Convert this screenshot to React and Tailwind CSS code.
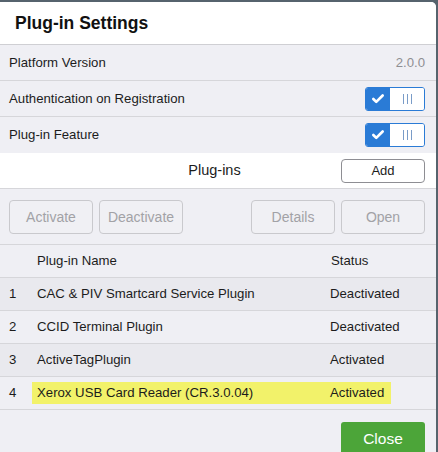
import { Check } from "lucide-react";

const plugins = [
  { id: 1, name: "CAC & PIV Smartcard Service Plugin", status: "Deactivated" },
  { id: 2, name: "CCID Terminal Plugin", status: "Deactivated" },
  { id: 3, name: "ActiveTagPlugin", status: "Activated" },
  { id: 4, name: "Xerox USB Card Reader (CR.3.0.04)", status: "Activated", highlight: true },
];

function Toggle() {
  return (
    <div className="flex w-[60px] h-[24px] rounded-[3px] border border-[#2a7bd6] overflow-hidden">
      <div className="w-[24px] bg-[#2a7bd6] flex items-center justify-center">
        <Check size={14} strokeWidth={4.5} className="text-white" />
      </div>
      <div className="flex-1 bg-white flex items-center justify-center gap-[3px]">
        <span className="w-px h-[10px] bg-[#7a9cc8]" />
        <span className="w-px h-[10px] bg-[#7a9cc8]" />
        <span className="w-px h-[10px] bg-[#7a9cc8]" />
      </div>
    </div>
  );
}

function GhostButton({ label, className = "" }) {
  return (
    <button
      disabled
      className={`h-[34px] w-[84px] rounded-[4px] border border-[#c9c9cd] bg-[#f0f0f4] text-[14px] text-[#a2a2a6] ${className}`}
    >
      {label}
    </button>
  );
}

export default function App() {
  return (
    <div className="w-[438px] h-[452px] bg-[#56636d] pt-[2px] overflow-hidden font-['Liberation_Sans',Arial,sans-serif] text-[#1c1c1c]">
      <div className="w-[436px] h-[450px] bg-[#efeff4] rounded-tr-[5px] overflow-hidden flex flex-col">
        <div className="h-[43px] shrink-0 bg-white border-b border-[#cfcfd3] flex items-center pl-[15px]">
          <h1 className="text-[17.5px] font-bold text-[#111]">Plug-in Settings</h1>
        </div>

        <div className="h-[36px] shrink-0 border-b border-[#d6d6da] flex items-center justify-between pl-[9px] pr-[11px] text-[13.2px]">
          <span>Platform Version</span>
          <span className="text-[#8e8e93]">2.0.0</span>
        </div>
        <div className="h-[36px] shrink-0 border-b border-[#d6d6da] flex items-center justify-between pl-[9px] pr-[11px] text-[13.2px]">
          <span>Authentication on Registration</span>
          <Toggle />
        </div>
        <div className="h-[36px] shrink-0 flex items-center justify-between pl-[9px] pr-[11px] text-[13.2px]">
          <span>Plug-in Feature</span>
          <Toggle />
        </div>

        <div className="h-[36px] shrink-0 bg-white border-b border-[#d6d6da] flex items-center pr-[11px]">
          <span className="flex-1 text-center text-[14.5px] pl-[88px]">Plug-ins</span>
          <button className="h-[24px] w-[84px] rounded-[4px] border border-[#8e8e93] bg-white text-[13px]">
            Add
          </button>
        </div>

        <div className="h-[56px] shrink-0 border-b border-[#d6d6da] flex items-center pl-[9px] pr-[11px] gap-[6px] pt-[1px]">
          <GhostButton label="Activate" />
          <GhostButton label="Deactivate" />
          <div className="flex-1" />
          <GhostButton label="Details" className="w-[83px]" />
          <GhostButton label="Open" />
        </div>

        <div className="h-[33px] shrink-0 border-b border-[#d6d6da] flex items-center text-[13.2px]">
          <span className="w-[37px]" />
          <span className="flex-1">Plug-in Name</span>
          <span className="w-[105px]">Status</span>
        </div>

        {plugins.map((p) => (
          <div
            key={p.id}
            className={`h-[33px] shrink-0 border-b border-[#d6d6da] flex items-center text-[13.2px] ${
              p.id % 2 === 1 ? "bg-[#e9e9ee]" : "bg-[#efeff4]"
            }`}
          >
            <span className="w-[32px] pl-[9px]">{p.id}</span>
            <div
              className={`flex items-center h-[22px] w-[359px] ${p.highlight ? "bg-[#f2f26a]" : ""}`}
            >
              <span className="flex-1 pl-[5px]">{p.name}</span>
              <span className="w-[61px]">{p.status}</span>
            </div>
          </div>
        ))}

        <div className="flex justify-end pr-[11px] pt-[12px]">
          <button className="h-[36px] w-[84px] rounded-[3px] bg-[#4ca539] text-white text-[15.5px] pb-[2px]">
            Close
          </button>
        </div>
      </div>
    </div>
  );
}
